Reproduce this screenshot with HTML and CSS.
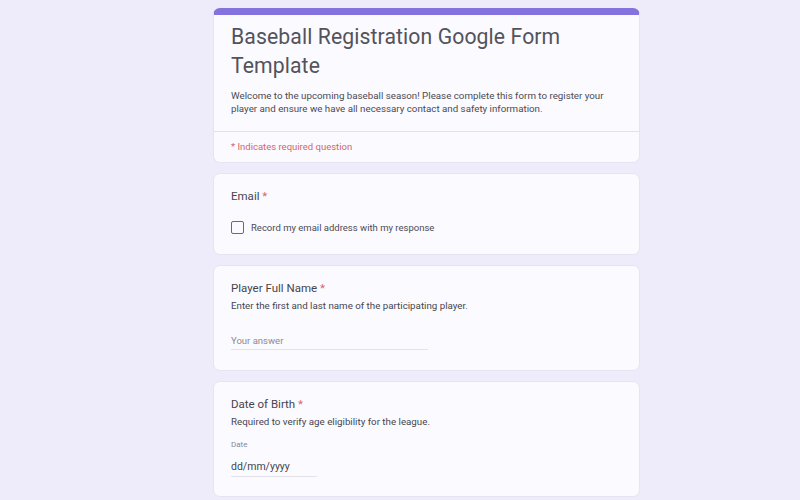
FILE: index.html
```html
<!DOCTYPE html>
<html>
<head>
<meta charset="utf-8">
<link rel="stylesheet" href="styles.css">
</head>
<body>
<main class="form">
  <section class="card header-card">
    <div class="header-main">
      <h1 class="title">Baseball Registration Google Form Template</h1>
      <p class="desc">Welcome to the upcoming baseball season! Please complete this form to register your player and ensure we have all necessary contact and safety information.</p>
    </div>
    <div class="required-note">* Indicates required question</div>
  </section>

  <section class="card question email-card">
    <div class="q-label">Email <span class="star">*</span></div>
    <label class="check-row"><span class="checkbox"></span><span class="check-text">Record my email address with my response</span></label>
  </section>

  <section class="card question name-card">
    <div class="q-label">Player Full Name <span class="star">*</span></div>
    <div class="q-desc">Enter the first and last name of the participating player.</div>
    <div class="answer">Your answer</div>
  </section>

  <section class="card question date-card">
    <div class="q-label">Date of Birth <span class="star">*</span></div>
    <div class="q-desc">Required to verify age eligibility for the league.</div>
    <div class="date-label">Date</div>
    <div class="date-input">dd/mm/yyyy</div>
  </section>
</main>
</body>
</html>
```
FILE: styles.css
```css
html, body {
  margin: 0;
  padding: 0;
  background: #eeebfb;
  font-family: Roboto, "Noto Sans", Arial, sans-serif;
  color: #45454e;
}
.form {
  width: 427px;
  margin-left: 213px;
  padding-top: 8px;
  display: flex;
  flex-direction: column;
  gap: 10px;
}
.card {
  background: #fbfaff;
  border-radius: 7px;
  border: 1px solid #e6e3f3;
  box-sizing: border-box;
}
.header-card {
  border-top: 7px solid #8473de;
  height: 155px;
  display: flex;
  flex-direction: column;
}
.header-main {
  padding: 7px 17px 0 17px;
  height: 117px;
  box-sizing: border-box;
  border-bottom: 1px solid #e2e0ea;
}
.title {
  margin: 0;
  font-size: 21.2px;
  font-weight: 400;
  line-height: 29px;
  color: #53535b;
  letter-spacing: 0.1px;
}
.desc {
  margin: 9px 0 0;
  font-size: 9.75px;
  line-height: 13px;
  color: #4a4a52;
}
.required-note {
  padding: 9px 17px 0;
  font-size: 9.5px;
  color: #d2676b;
}
.question {
  padding: 14px 17px 0;
}
.email-card { height: 82px; }
.name-card { height: 106px; }
.date-card { height: 116px; }
.q-label {
  font-size: 11.5px;
  line-height: 16px;
  color: #45454e;
}
.star { color: #d2676b; }
.check-row {
  display: flex;
  align-items: center;
  gap: 7px;
  margin-top: 17px;
}
.checkbox {
  width: 11px;
  height: 11px;
  border: 1.5px solid #6a6a72;
  border-radius: 2px;
  flex: none;
}
.check-text {
  font-size: 9.5px;
  color: #4c4c54;
}
.q-desc {
  margin-top: 3px;
  font-size: 9.75px;
  line-height: 14px;
  color: #45454e;
}
.answer {
  margin-top: 22px;
  width: 197px;
  font-size: 9.5px;
  color: #8a8a92;
  padding-bottom: 3px;
  border-bottom: 1px solid #e4e2ea;
}
.date-label {
  margin-top: 11px;
  font-size: 8px;
  color: #8a8a92;
}
.date-input {
  margin-top: 11px;
  width: 86px;
  font-size: 10.5px;
  color: #45454e;
  padding-bottom: 3px;
  border-bottom: 1px solid #e4e2ea;
}
```
